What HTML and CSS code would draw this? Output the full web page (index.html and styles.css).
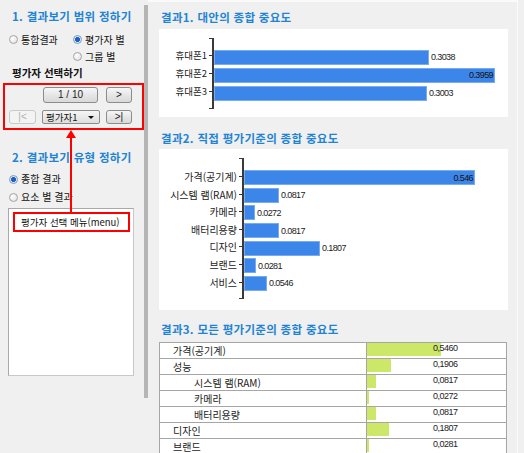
FILE: index.html
```html
<!DOCTYPE html>
<html lang="ko">
<head>
<meta charset="utf-8">
<title>결과보기</title>
<link rel="stylesheet" href="styles.css">
</head>
<body>
<div class="app">
  <aside class="left">
    <h2 class="sec-title">1. 결과보기 범위 정하기</h2>
    <div class="radio-grid">
      <label class="radio"><span class="dot"></span>통합결과</label>
      <label class="radio"><span class="dot on"></span>평가자 별</label>
      <span></span>
      <label class="radio"><span class="dot"></span>그룹 별</label>
    </div>
    <div class="sub-title">평가자 선택하기</div>
    <div class="nav-box">
      <span></span>
      <button class="btn page">1 / 10</button>
      <button class="btn">&gt;</button>
      <button class="btn disabled">|&lt;</button>
      <div class="combo"><span>평가자1</span><span class="caret"></span></div>
      <button class="btn">&gt;|</button>
    </div>
    <h2 class="sec-title t2">2. 결과보기 유형 정하기</h2>
    <div class="radio-col">
      <label class="radio"><span class="dot on"></span>종합 결과</label>
      <label class="radio"><span class="dot"></span>요소 별 결과</label>
    </div>
    <div class="listbox">
      <div class="menu-item">평가자 선택 메뉴(menu)</div>
    </div>
    <div class="arrow"></div>
  </aside>
  <div class="splitter"></div>
  <main class="right">
    <h2 class="chart-title">결과1. 대안의 종합 중요도</h2>
    <div class="chart-box c1">
      <div class="chart">
        <div class="labels">
          <div class="lbl">휴대폰1</div>
          <div class="lbl">휴대폰2</div>
          <div class="lbl">휴대폰3</div>
        </div>
        <div class="plot">
          <div class="row"><div class="bar" style="width:215px"></div><span class="val">0.3038</span></div>
          <div class="row"><div class="bar inside" style="width:281px"><span class="val">0.3959</span></div></div>
          <div class="row"><div class="bar" style="width:213px"></div><span class="val">0.3003</span></div>
        </div>
      </div>
    </div>

    <h2 class="chart-title t-2">결과2. 직접 평가기준의 종합 중요도</h2>
    <div class="chart-box c2">
      <div class="chart">
        <div class="labels">
          <div class="lbl">가격(공기계)</div>
          <div class="lbl">시스템 램(RAM)</div>
          <div class="lbl">카메라</div>
          <div class="lbl">배터리용량</div>
          <div class="lbl">디자인</div>
          <div class="lbl">브랜드</div>
          <div class="lbl">서비스</div>
        </div>
        <div class="plot">
          <div class="row"><div class="bar inside" style="width:231px"><span class="val">0.546</span></div></div>
          <div class="row"><div class="bar" style="width:35px"></div><span class="val">0.0817</span></div>
          <div class="row"><div class="bar" style="width:11px"></div><span class="val">0.0272</span></div>
          <div class="row"><div class="bar" style="width:35px"></div><span class="val">0.0817</span></div>
          <div class="row"><div class="bar" style="width:76px"></div><span class="val">0.1807</span></div>
          <div class="row"><div class="bar" style="width:12px"></div><span class="val">0.0281</span></div>
          <div class="row"><div class="bar" style="width:23px"></div><span class="val">0.0546</span></div>
        </div>
      </div>
    </div>

    <h2 class="chart-title t-3">결과3. 모든 평가기준의 종합 중요도</h2>
    <table class="grid">
      <colgroup><col class="col-name"><col class="col-val"></colgroup>
      <tr><td class="name">가격(공기계)</td><td><div class="cell"><div class="gbar" style="width:74px"></div><span class="gval">0,5460</span></div></td></tr>
      <tr><td class="name">성능</td><td><div class="cell"><div class="gbar" style="width:24px"></div><span class="gval">0,1906</span></div></td></tr>
      <tr><td class="name sub">시스템 램(RAM)</td><td><div class="cell"><div class="gbar" style="width:9px"></div><span class="gval">0,0817</span></div></td></tr>
      <tr><td class="name sub">카메라</td><td><div class="cell"><div class="gbar" style="width:2px"></div><span class="gval">0,0272</span></div></td></tr>
      <tr><td class="name sub">배터리용량</td><td><div class="cell"><div class="gbar" style="width:9px"></div><span class="gval">0,0817</span></div></td></tr>
      <tr><td class="name">디자인</td><td><div class="cell"><div class="gbar" style="width:22px"></div><span class="gval">0,1807</span></div></td></tr>
      <tr><td class="name">브랜드</td><td><div class="cell"><div class="gbar" style="width:2px"></div><span class="gval">0,0281</span></div></td></tr>
    </table>
  </main>
</div>
</body>
</html>
```

FILE: styles.css
```css
html, body {
  margin: 0;
  padding: 0;
  height: 100%;
  overflow: hidden;
  background: #f0f0f0;
}
body {
  font-family: "Noto Sans CJK KR", "Noto Sans", sans-serif;
  font-size: 10px;
  color: #111;
}
.app {
  display: flex;
  align-items: flex-start;
  height: 453px;
}

/* ---------- left panel ---------- */
.left {
  position: relative;
  width: 144px;
  flex: none;
  display: flex;
  flex-direction: column;
}
.left > * { flex: none; }
.sec-title {
  margin: 8px 0 0 12px;
  height: 16px;
  line-height: 16px;
  font-size: 11.5px;
  font-weight: bold;
  color: #1f84d3;
  letter-spacing: 0.3px;
  white-space: nowrap;
}
.sec-title.t2 { margin-top: 19px; }

.radio-grid {
  display: grid;
  grid-template-columns: 64px auto;
  grid-auto-rows: 17px;
  margin: 7px 0 0 9px;
}
.radio {
  display: flex;
  align-items: center;
  gap: 3px;
  font-size: 10px;
  line-height: 17px;
  white-space: nowrap;
}
.dot {
  width: 7px;
  height: 7px;
  border-radius: 50%;
  border: 1px solid #a4a4a4;
  background: radial-gradient(circle at 35% 35%, #ffffff, #dcdcdc);
  flex: none;
}
.dot.on {
  background: radial-gradient(circle, #1f5fc4 0 2.2px, #d3e6f7 2.6px, #eef5fb 100%);
  border-color: #7a9cc2;
}
.sub-title {
  margin: 0 0 0 12px;
  height: 16px;
  line-height: 16px;
  font-weight: bold;
  font-size: 10.5px;
  color: #111;
}
.nav-box {
  margin: 2px 0 0 3px;
  border: 2px solid #ff0000;
  display: grid;
  grid-template-columns: 27px 58px 26px;
  grid-template-rows: 16px 14px;
  column-gap: 6px;
  row-gap: 7px;
  padding: 2px 0 4px 4px;
  box-sizing: border-box;
  height: 47px;
  width: 141px;
}
.btn {
  font-family: "Liberation Sans", sans-serif;
  font-size: 10px;
  padding: 0;
  margin: 0;
  border: 1px solid #8c8c8c;
  border-radius: 3px;
  background: linear-gradient(#f7f7f7, #e6e6e6 50%, #d9d9d9);
  color: #222;
  line-height: 12px;
}
.btn.page { margin: 0 2px 0 1px; }
.btn.disabled {
  color: #b0b0b0;
  border-color: #c9c9c9;
  background: #f3f3f3;
}
.combo {
  display: flex;
  align-items: center;
  justify-content: space-between;
  border: 1px solid #8c8c8c;
  border-radius: 2px;
  background: linear-gradient(#f5f5f5, #dedede);
  padding: 0 5px 0 3px;
  font-size: 9.5px;
  line-height: 12px;
}
.caret {
  width: 0;
  height: 0;
  border-left: 3px solid transparent;
  border-right: 3px solid transparent;
  border-top: 3px solid #111;
}
.radio-col {
  display: grid;
  grid-auto-rows: 18px;
  margin: 5px 0 0 9px;
}
.radio-col .radio { line-height: 18px; }
.listbox {
  margin: 2px 0 0 8px;
  width: 126px;
  height: 168px;
  box-sizing: border-box;
  background: #fff;
  border: 1px solid #a9a9a9;
  border-right-color: #c8c8c8;
  border-bottom-color: #c8c8c8;
  padding: 3px 0 0 4px;
}
.menu-item {
  width: 117px;
  height: 20px;
  box-sizing: border-box;
  border: 2px solid #ff0000;
  font-size: 9.5px;
  line-height: 16px;
  padding-left: 6px;
  white-space: nowrap;
}
.arrow {
  position: absolute;
  left: 70px;
  top: 132px;
  width: 2px;
  height: 80px;
  background: #ff0000;
}
.arrow::before {
  content: "";
  position: absolute;
  left: -4px;
  top: -2px;
  border-left: 5px solid transparent;
  border-right: 5px solid transparent;
  border-bottom: 8px solid #ff0000;
}
.splitter {
  flex: none;
  width: 4px;
  height: 393px;
  margin-top: 5px;
  background: #b5b5b5;
}

/* ---------- right panel ---------- */
.right {
  flex: none;
  width: 370px;
  height: 453px;
  box-sizing: border-box;
  border-top: 2px solid #fafafa;
  border-right: 1px solid #fafafa;
  padding-left: 11px;
  display: flex;
  flex-direction: column;
  overflow: hidden;
}
.right > * { flex: none; }
.chart-title {
  margin: 7px 0 0 2px;
  height: 16px;
  line-height: 16px;
  font-size: 11.5px;
  font-weight: bold;
  color: #1f84d3;
  letter-spacing: 0.3px;
  white-space: nowrap;
}
.chart-title.t-2 { margin-top: 13px; }
.chart-title.t-3 { margin-top: 11px; }
.chart-box {
  width: 349px;
  background: #fff;
  box-sizing: border-box;
}
.c1 { margin-top: 4px; height: 88px; padding-top: 9px; }
.c2 { margin-top: 3px; height: 161px; padding-top: 9px; }
.chart { display: flex; }
.labels {
  flex: none;
  display: flex;
  flex-direction: column;
  align-items: flex-end;
}
.lbl {
  position: relative;
  height: 18px;
  line-height: 15px;
  padding-right: 6px;
  font-size: 9.5px;
  color: #222;
  white-space: nowrap;
}
.lbl::after {
  content: "";
  position: absolute;
  right: 0;
  top: 7px;
  width: 4px;
  height: 1px;
  background: #333;
}
.c1 .labels { width: 54px; padding-top: 10px; }
.c2 .labels { width: 84px; padding-top: 11px; }
.c2 .lbl { height: 17.6px; font-size: 10px; }
.plot {
  position: relative;
  border-left: 2px solid #3a3a3a;
  margin-left: -1px;
  display: flex;
  flex-direction: column;
}
.plot::before, .plot::after {
  content: "";
  position: absolute;
  left: -5px;
  width: 4px;
  height: 1px;
  background: #3a3a3a;
}
.plot::before { top: 0; }
.plot::after { bottom: 0; }
.c1 .plot { padding: 10px 0 7px; }
.c2 .plot { padding: 11px 0 7px; }
.row {
  display: flex;
  align-items: center;
  height: 18px;
}
.c2 .row { height: 17.6px; }
.bar {
  height: 15px;
  box-sizing: border-box;
  background: #3d86e9;
  border: 1px solid #78abf0;
  display: flex;
  align-items: center;
  justify-content: flex-end;
}
.val {
  font-family: "Liberation Sans", sans-serif;
  font-size: 9px;
  letter-spacing: -0.6px;
  color: #222;
  margin-left: 2px;
  line-height: 12px;
}
.bar.inside .val { margin: 0 1px 0 0; color: #111; }

/* ---------- table ---------- */
.grid {
  margin-top: 5px;
  width: 347px;
  border-collapse: collapse;
  background: #fff;
  table-layout: fixed;
}
.col-name { width: 207px; }
.col-val { width: 140px; }
.grid td {
  border: 1px solid #a6a6a6;
  height: 15px;
  padding: 0;
  vertical-align: top;
}
.grid td.name {
  padding-left: 13px;
  font-size: 10px;
  line-height: 14px;
  white-space: nowrap;
  color: #222;
  vertical-align: middle;
}
.grid td.name.sub { padding-left: 34px; }
.cell {
  display: grid;
  height: 15px;
}
.gbar, .gval { grid-area: 1 / 1; }
.gbar {
  height: 13px;
  background: #cde869;
  justify-self: start;
}
.gval {
  font-family: "Liberation Sans", sans-serif;
  font-size: 9px;
  letter-spacing: -0.5px;
  line-height: 10px;
  margin-left: 66px;
  color: #222;
}
```
